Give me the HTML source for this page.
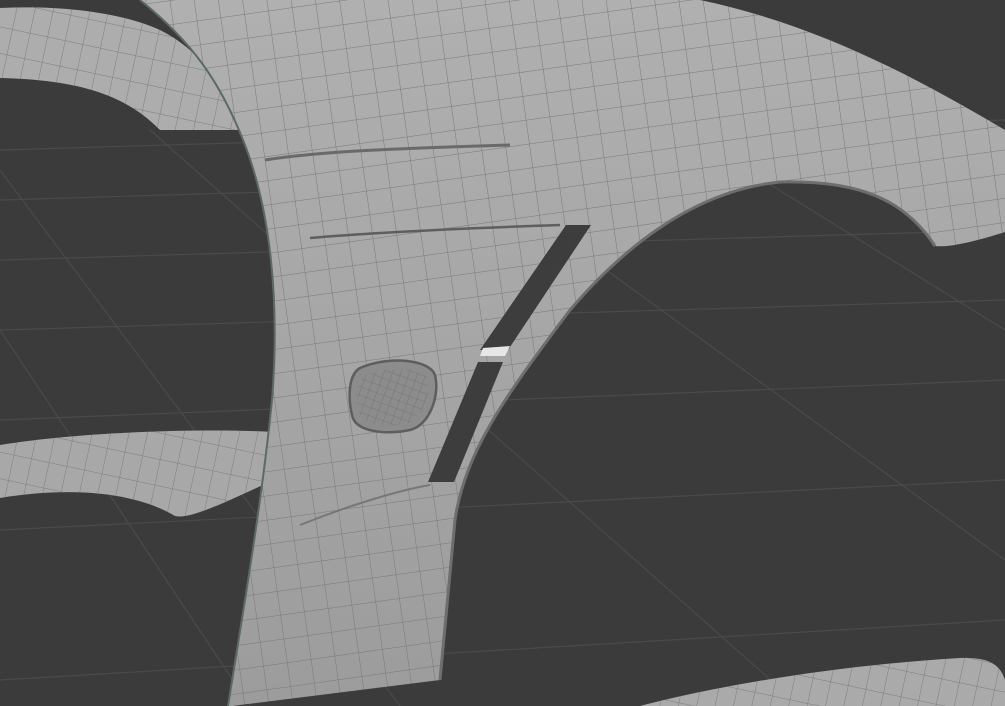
<!DOCTYPE html>
<html><head><meta charset="utf-8"><style>
html,body{margin:0;padding:0;background:#3b3b3b;width:1005px;height:706px;overflow:hidden}
svg{display:block}
</style></head><body>
<svg width="1005" height="706" viewBox="0 0 1005 706" xmlns="http://www.w3.org/2000/svg">
<defs>
<pattern id="mesh" width="24" height="24" patternUnits="userSpaceOnUse" patternTransform="rotate(-8)">
<path d="M0 0H24M0 0V24" stroke="#787878" stroke-width="1" fill="none"/>
</pattern>
<pattern id="mesh2" width="18" height="26" patternUnits="userSpaceOnUse" patternTransform="rotate(12)">
<path d="M0 0H18M0 0V26" stroke="#7c7c7c" stroke-width="1" fill="none"/>
</pattern>
<pattern id="mesh3" width="8" height="8" patternUnits="userSpaceOnUse" patternTransform="rotate(20)">
<path d="M0 0H8M0 0V8" stroke="#6f6f6f" stroke-width="0.8" fill="none"/>
</pattern>
<linearGradient id="fg" x1="0" y1="0" x2="0" y2="1">
<stop offset="0" stop-color="#b0b0b0"/><stop offset="0.5" stop-color="#a6a6a6"/><stop offset="1" stop-color="#9c9c9c"/>
</linearGradient>
</defs>
<rect width="1005" height="706" fill="#3b3b3b"/>
<g stroke="#4a4a4a" stroke-width="1.2" fill="none">
<path d="M0 150L1005 120M0 200L1005 170M0 260L1005 230M0 330L1005 300M0 420L1005 380M0 530L1005 480M0 680L1005 620"/>
<path d="M0 170L400 706M150 130L800 706M400 120L1005 560M650 110L1005 330M0 330L250 706M880 100L1005 180"/>
</g>
<path d="M0 8C60 5 120 12 160 30C200 50 225 85 238 130L160 130C130 100 90 80 0 78Z" fill="#adadad"/>
<path d="M0 8C60 5 120 12 160 30C200 50 225 85 238 130L160 130C130 100 90 80 0 78Z" fill="url(#mesh2)"/>
<path d="M0 445C80 432 200 428 275 432L278 478C230 500 190 520 175 516C140 495 80 485 0 498Z" fill="#a8a8a8"/>
<path d="M0 445C80 432 200 428 275 432L278 478C230 500 190 520 175 516C140 495 80 485 0 498Z" fill="url(#mesh2)"/>
<path d="M140 0L700 0C820 25 920 80 1005 130L1005 232C980 240 950 248 935 246C905 200 860 180 780 182C700 190 630 240 570 310C510 390 465 450 455 520L440 680L232 706L228 706C245 600 262 500 272 400C280 300 270 210 245 145C220 80 190 40 140 0Z" fill="url(#fg)"/>
<path d="M140 0L700 0C820 25 920 80 1005 130L1005 232C980 240 950 248 935 246C905 200 860 180 780 182C700 190 630 240 570 310C510 390 465 450 455 520L440 680L232 706L228 706C245 600 262 500 272 400C280 300 270 210 245 145C220 80 190 40 140 0Z" fill="url(#mesh)"/>
<path d="M935 246C905 200 860 180 780 182C700 190 630 240 570 310C510 390 465 450 455 520L440 680" stroke="#6e6e6e" stroke-width="3" fill="none"/>
<path d="M228 706C245 600 262 500 272 400C280 300 270 210 245 145C220 80 190 40 140 0" stroke="#5a6b66" stroke-width="2" fill="none"/>
<path d="M265 160C330 150 420 148 510 145" stroke="#6a6a6a" stroke-width="3" fill="none"/>
<path d="M310 238C380 232 470 228 560 225" stroke="#5e5e5e" stroke-width="2.5" fill="none"/>
<path d="M300 525C350 505 400 490 430 485" stroke="#777" stroke-width="2" fill="none"/>
<path d="M566 225L591 225L508 350L480 350Z" fill="#3d3d3d"/>
<path d="M478 362L503 362L454 482L428 482Z" fill="#3d3d3d"/>
<path d="M483 348L510 346L505 356L480 356Z" fill="#e6e6e6"/>
<path d="M360 368C390 355 430 360 435 375C440 395 430 425 410 430C385 435 355 432 352 415C348 398 348 375 360 368Z" fill="#8c8c8c" stroke="#5e5e5e" stroke-width="2.5"/>
<path d="M365 375C390 366 425 368 428 380C430 398 422 420 405 424C382 428 360 424 358 410C356 395 357 380 365 375Z" fill="url(#mesh3)"/>
<path d="M640 706C720 685 840 665 960 658C990 657 1000 665 1005 680L1005 706Z" fill="#aaaaaa"/>
<path d="M640 706C720 685 840 665 960 658C990 657 1000 665 1005 680L1005 706Z" fill="url(#mesh2)"/>
</svg>
</body></html>
